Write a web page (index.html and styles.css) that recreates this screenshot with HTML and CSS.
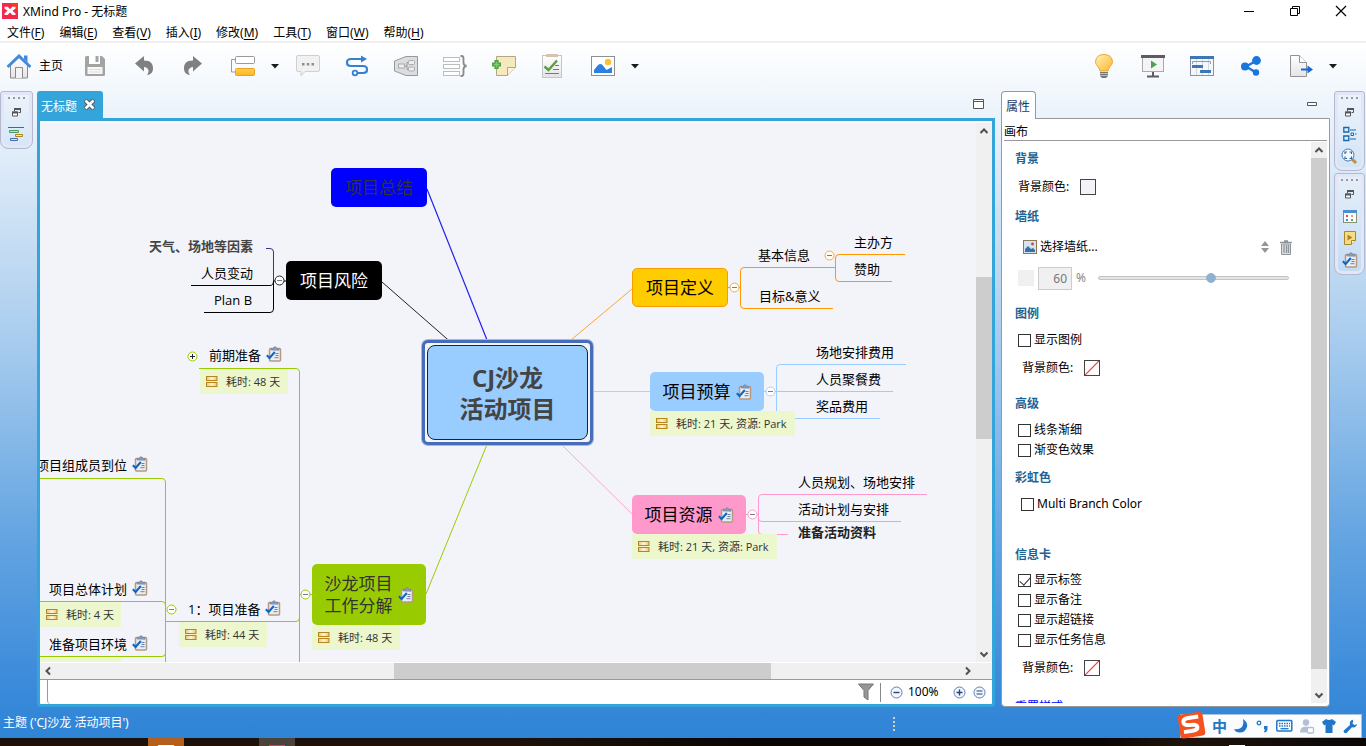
FILE: index.html
```html
<!DOCTYPE html>
<html lang="zh-CN">
<head>
<meta charset="utf-8">
<title>XMind Pro - 无标题</title>
<link rel="stylesheet" href="styles.css">
</head>
<body>
<svg class="defs" aria-hidden="true">
  <defs>
    <linearGradient id="gBulb" x1="0" y1="0" x2="1" y2="1"><stop offset="0" stop-color="#fff3b8"/><stop offset="1" stop-color="#fbb62c"/></linearGradient>
    <linearGradient id="gOrange" x1="0" y1="0" x2="0" y2="1"><stop offset="0" stop-color="#ffd050"/><stop offset="1" stop-color="#fcb424"/></linearGradient>
    <linearGradient id="gGold" x1="0" y1="0" x2="1" y2="0"><stop offset="0" stop-color="#f0c264"/><stop offset=".5" stop-color="#fff5dc"/><stop offset="1" stop-color="#f0c264"/></linearGradient>
    <linearGradient id="gPaper" x1="0" y1="0" x2="0" y2="1"><stop offset="0" stop-color="#fff"/><stop offset="1" stop-color="#e4e4e6"/></linearGradient>
    <symbol id="task" viewBox="0 0 16 16">
      <rect x="3.500" y="2.500" width="11" height="12.500" rx="1" fill="#e8edf6" stroke="#b79a7c" stroke-width="1.500"/>
      <path d="M5 4V2.500h2.300C7.300 .3 10.700 .3 10.700 2.500H13V4.300z" fill="#8b9bb9" stroke="#7080a3" stroke-width=".6"/>
      <path d="M9.500 7.500h3M9.500 9.500h3M8.500 11.700h4" stroke="#6a7fb0"/>
      <path d="M.8 9.200 3.600 12 8.800 6" fill="none" stroke="#0a66c4" stroke-width="2"/>
    </symbol>
    <symbol id="drawer" viewBox="0 0 12 12">
      <rect x=".5" y=".5" width="10.500" height="4" fill="url(#gGold)" stroke="#b5851f"/>
      <rect x=".5" y="6.500" width="10.500" height="4" fill="url(#gGold)" stroke="#b5851f"/>
    </symbol>
    <symbol id="restore" viewBox="0 0 9 9">
      <path d="M2.500 3V1h6v3.500H6.500" fill="none" stroke="#555"/><path d="M2 1h7" stroke="#555" stroke-width="2"/>
      <path d="M.5 4h5v4h-5z" fill="#fff" stroke="#555"/><path d="M0 4.500h6" stroke="#555" stroke-width="2"/>
    </symbol>
    <symbol id="slash" viewBox="0 0 14 14"><path d="M0 14 14 0" stroke="#f33" stroke-width="1.200"/></symbol>
    <symbol id="caret" viewBox="0 0 8 5"><path d="M0 0h8L4 4.500z" fill="#1c1c1c"/></symbol>
    <symbol id="minus" viewBox="0 0 11 11"><circle cx="5.500" cy="5.500" r="4.500" fill="#fff" stroke="currentColor"/><path d="M3 5.500h5" stroke="#7a7a94"/></symbol>
    <symbol id="plus" viewBox="0 0 11 11"><circle cx="5.500" cy="5.500" r="4.500" fill="#fff" stroke="currentColor"/><path d="M3 5.500h5M5.500 3v5" stroke="#223"/></symbol>
    <symbol id="up" viewBox="0 0 16 16"><path d="M4.500 10 8 6.500 11.500 10" fill="none" stroke="#505050" stroke-width="2"/></symbol>
    <symbol id="down" viewBox="0 0 16 16"><path d="M4.500 6.500 8 10 11.500 6.500" fill="none" stroke="#505050" stroke-width="2"/></symbol>
    <symbol id="left" viewBox="0 0 16 16"><path d="M10 4.500 6.500 8 10 11.500" fill="none" stroke="#505050" stroke-width="2"/></symbol>
    <symbol id="right" viewBox="0 0 16 16"><path d="M6 4.500 9.500 8 6 11.500" fill="none" stroke="#505050" stroke-width="2"/></symbol>
  </defs>
</svg>

<header class="titlebar">
  <svg class="logo" width="16" height="16" viewBox="0 0 16 16"><rect width="16" height="16" fill="#f5274c"/><path d="M16 0v8L8 0z" fill="#fa3a1d"/><path d="M2.500 3.800h3.300L8 6.200l2.200-2.400h3.300v1.600L10.500 7.800l3 2.600V12h-3L8 9.400 5.500 12h-3v-1.600l3-2.600-3-2.400z" fill="#fff"/></svg>
  <h1>XMind Pro - 无标题</h1>
  <div class="winbtns">
    <button aria-label="最小化"><svg width="12" height="12"><path d="M1 6.500h10" stroke="#000"/></svg></button>
    <button aria-label="还原"><svg width="12" height="12"><path d="M1.500 3.500h7v7h-7zM3.500 3.500v-2h7v7h-2" fill="none" stroke="#000"/></svg></button>
    <button aria-label="关闭"><svg width="12" height="12"><path d="M1 1l10 10M11 1 1 11" stroke="#000" stroke-width="1.200"/></svg></button>
  </div>
</header>

<nav class="menubar">
  <button>文件(<u>F</u>)</button><button>编辑(<u>E</u>)</button><button>查看(<u>V</u>)</button><button>插入(<u>I</u>)</button><button>修改(<u>M</u>)</button><button>工具(<u>T</u>)</button><button>窗口(<u>W</u>)</button><button>帮助(<u>H</u>)</button>
</nav>

<div class="app">
  <div class="toolbar">
    <button class="home"><svg width="26" height="26" viewBox="0 0 26 26"><path d="M4.500 12.500 13 4.500l8.500 8V25h-17z" fill="url(#gPaper)" stroke="#8a8a8a"/><path d="M9.500 25V14.500h7V25" fill="#f4f4f4" stroke="#8a8a8a"/><path d="M18 2.500h3.500v7L18 6z" fill="#3f8ae0"/><path d="M1.500 14 13 3l11.500 11" fill="none" stroke="#3f8ae0" stroke-width="2.800"/></svg><span>主页</span></button>
    <button class="tool" aria-label="保存"><svg width="24" height="24" viewBox="0 0 24 24"><path d="M2 3.500Q2 2 3.500 2H19l3 3v15.500Q22 22 20.500 22h-17Q2 22 2 20.500z" fill="#a3a3a3"/><path d="M6 2h11v8h-11z" fill="#fff"/><path d="M12.500 2h3v6h-3z" fill="#a3a3a3"/><path d="M4.500 13h15v7h-15z" fill="#f8f8f8"/><path d="M6 15.500h12M6 18h12" stroke="#ddd"/></svg></button>
    <button class="tool" aria-label="撤销"><svg width="24" height="24" viewBox="0 0 24 24"><path d="M3 9.500 12 2v4.500c7 0 9 3.500 9 8 0 3.500-2 6-6 6.500 3-4 1.500-7.500-3-8v4.500z" fill="#808080"/></svg></button>
    <button class="tool" aria-label="重做"><svg width="24" height="24" viewBox="0 0 24 24"><path d="M21 9.500 12 2v4.500c-7 0-9 3.500-9 8 0 3.500 2 6 6 6.500-3-4-1.500-7.500 3-8v4.500z" fill="#808080"/></svg></button>
    <button class="tool split" aria-label="主题"><svg width="26" height="24" viewBox="0 0 26 24"><path d="M6 5.500H1.500v12.500H6" fill="none" stroke="#9a9a9a"/><rect x="5.500" y="2.500" width="19" height="7" rx="1" fill="#fff" stroke="#999"/><rect x="5.500" y="14.500" width="19" height="7" rx="1" fill="url(#gOrange)" stroke="#eaa223"/></svg></button><button class="drop" aria-label="更多主题"><svg width="8" height="5"><use href="#caret"/></svg></button>
    <button class="tool" aria-label="批注"><svg width="26" height="24" viewBox="0 0 26 24"><path d="M3 1.500h20Q24.500 1.500 24.500 3v13q0 1.500-1.500 1.500H10L6 22v-4.500H3Q1.500 17.500 1.500 16V3Q1.500 1.500 3 1.500z" fill="#f1f1f1" stroke="#d0d0d0"/><path d="M7 9h2.500v2.500H7zM11.800 9h2.500v2.500h-2.500zM16.500 9H19v2.500h-2.500z" fill="#8e8e8e"/></svg></button>
    <button class="tool" aria-label="联系"><svg width="24" height="24" viewBox="0 0 24 24"><path d="M17 5H6Q2 5 2 8.500T6 12h12q4 0 4 3.500T18 19h-5" fill="none" stroke="#3680d0" stroke-width="2.200"/><path d="M16 1.500 22 5l-6 3.500z" fill="#3680d0"/><circle cx="10" cy="19" r="2.300" fill="#fff" stroke="#3680d0" stroke-width="1.800"/></svg></button>
    <button class="tool" aria-label="外框"><svg width="26" height="24" viewBox="0 0 26 24"><path d="M1.500 7 13 2.500h11.500v19H13L1.500 17z" fill="#dcdde0" stroke="#999"/><path d="M12 12h2M16 8.500h-2v7h2" fill="none" stroke="#999"/><rect x="5.500" y="10" width="6" height="4" fill="#eee" stroke="#aaa"/><rect x="15.500" y="6.500" width="6" height="4" rx="1" fill="#eee" stroke="#aaa"/><rect x="15.500" y="13" width="6" height="4" rx="1" fill="#eee" stroke="#aaa"/></svg></button>
    <button class="tool" aria-label="概要"><svg width="26" height="24" viewBox="0 0 26 24"><g fill="#fff" stroke="#bdbdbd"><rect x="1.500" y="3.500" width="16" height="4"/><rect x="1.500" y="10.500" width="16" height="4"/><rect x="1.500" y="17.500" width="16" height="4"/></g><path d="M18.500 2h1q2 0 2 2.500v4q0 3 3 3.500-3 .5-3 3.500v4q0 2.500-2 2.500h-1" fill="none" stroke="#8a8a8a" stroke-width="1.800"/></svg></button>
    <button class="tool" aria-label="备注"><svg width="26" height="24" viewBox="0 0 26 24"><path d="M5.500 2.500h19v11l-8 8h-11z" fill="#f6e9bd" stroke="#b4a680"/><path d="M24.500 13.500h-8v8" fill="#fbf5df" stroke="#b4a680"/><path d="M5.500 6v9M1 10.500h9" stroke="#4b9f45" stroke-width="4.200"/><path d="M5.500 7.500v6M2.500 10.500h6" stroke="#82cc73" stroke-width="1.500"/></svg></button>
    <button class="tool" aria-label="任务信息"><svg width="24" height="26" viewBox="0 0 24 26"><rect x="1.500" y="2.500" width="19" height="22" fill="url(#gPaper)" stroke="#c6c6c6"/><path d="M5 1h12v3H5z" fill="#d6c2ae"/><path d="M3.500 13.500 7.500 17 16 7.500" fill="none" stroke="#5a9d49" stroke-width="2.400"/><path d="M14 12.500h4M12 16.500h6M4 20.500h14" stroke="#777" stroke-width="1.200"/></svg></button>
    <button class="tool split" aria-label="图片"><svg width="26" height="24" viewBox="0 0 26 24"><rect x="1.500" y="2.500" width="23" height="19" fill="#fff" stroke="#8f8f8f"/><circle cx="18" cy="8" r="3.200" fill="#fcc22f"/><path d="M4 19v-3l4-5q2.500-2 4.500 0l4 5 5.500-3v6z" fill="#2b80e0"/></svg></button><button class="drop" aria-label="更多图片"><svg width="8" height="5"><use href="#caret"/></svg></button>
    <span class="spring"></span>
    <button class="tool" aria-label="头脑风暴"><svg width="20" height="26" viewBox="0 0 20 26"><path d="M6 18q0-2-2-4.200Q1.500 11 1.500 9 2 1.500 10 1.500T18.500 9q0 2-2.500 4.800-2 2.200-2 4.200z" fill="url(#gBulb)" stroke="#e9a92f"/><path d="M6 19h8v4l-2 2H8l-2-2z" fill="#777"/><path d="M6 20.500h8M6 22.500h8" stroke="#bbb"/></svg></button>
    <button class="tool" aria-label="演示"><svg width="26" height="24" viewBox="0 0 26 24"><path d="M13 18v4M7 22.500h12" stroke="#5d5d5d" stroke-width="2"/><rect x="2.500" y="3.500" width="21" height="14" fill="#f4f4f6" stroke="#aaa"/><path d="M1 1h24v3H1z" fill="#5d5d5d"/><path d="M11 6.500v8l6-4z" fill="#4e9f52"/></svg></button>
    <button class="tool" aria-label="甘特图"><svg width="26" height="24" viewBox="0 0 26 24"><rect x="1.500" y="2.500" width="23" height="19" fill="#f5f7fb" stroke="#8592a5"/><path d="M7.500 5v16M13.500 5v16M19.500 5v16" stroke="#d3d9e2"/><path d="M1 2h24v3H1z" fill="#3e77b6"/><path d="M3.500 10V7.500h18V10" fill="none" stroke="#9a9a9a"/><path d="M3 12.500h11M11 17.500h11" stroke="#3e77b6" stroke-width="3"/></svg></button>
    <button class="tool" aria-label="分享"><svg width="24" height="24" viewBox="0 0 24 24"><path d="M17 7 7 12.500l10 6" fill="none" stroke="#1877dc" stroke-width="2.400"/><circle cx="17.500" cy="6.500" r="4.400" fill="#1877dc"/><circle cx="6" cy="12.500" r="4" fill="#1877dc"/><circle cx="17" cy="18.500" r="3.200" fill="#1877dc"/></svg></button>
    <button class="tool split-end" aria-label="导出"><svg width="26" height="24" viewBox="0 0 26 24"><path d="M2.500 1.500h9l7 7v14h-16z" fill="url(#gPaper)" stroke="#929292"/><path d="M11.500 1.500v7h7" fill="#fff" stroke="#929292"/><path d="M13 15.500h8" stroke="#1669d2" stroke-width="2"/><path d="M19.500 11.500l5.500 4-5.500 4z" fill="#1669d2"/></svg></button><button class="drop" aria-label="更多导出"><svg width="8" height="5"><use href="#caret"/></svg></button>
  </div>

  <main class="work">
    <aside class="trim trim-left">
      <div class="stack">
        <span class="grip"></span>
        <button aria-label="还原"><svg width="9" height="9"><use href="#restore"/></svg></button>
        <button aria-label="大纲"><svg width="17" height="16" viewBox="0 0 17 16"><path d="M0 1.500h16" stroke="#2f6ea8"/><path d="M1.500 4.500h9v2h-9z" fill="#bfe4b8" stroke="#4f9b66"/><path d="M7.500 8.500h7v2h-7z" fill="#fbe9a8" stroke="#b0851c"/><path d="M2.500 12.500h7v2h-7z" fill="#d8e2f5" stroke="#4b6cb0"/></svg></button>
      </div>
    </aside>

    <section class="editor">
      <div class="tabs">
        <div class="tab"><span>无标题</span><button aria-label="关闭标签"><svg width="11" height="11" viewBox="0 0 11 11"><path d="M1 1l9 9M10 1l-9 9" stroke="#4b5a63" stroke-width="4.500"/><path d="M1.500 1.500l8 8M9.500 1.500l-8 8" stroke="#fff" stroke-width="2.600"/></svg></button></div>
        <button class="maxbtn" aria-label="最大化"><svg width="11" height="11"><path d="M.5 .5h10v9h-10zM.5 2.500h10" fill="#fff" stroke="#555"/></svg></button>
      </div>
      <div class="frame">
        <div class="viewport">
          <div class="canvas">
            <svg class="links" width="937" height="541">
              <g transform="translate(-40 -123)" fill="none">
                <path d="M427 189 489 345" stroke="#2020f0" stroke-width="1.200"/>
                <path d="M382 282 454 345" stroke="#222"/>
                <path d="M632 289 565 345" stroke="#ffa726"/>
                <path d="M650 391.500H592" stroke="#aad4fb"/>
                <path d="M632 514 559 442" stroke="#fba6cf"/>
                <path d="M426 594 488 442" stroke="#9c0"/>
                <path d="M266 248.500h4q3.500 0 3.500 3.500V281" stroke="#35358c"/>
                <path d="M191 285.500h79q3.500 0 3.500-4.500M204 312.500h66q3.500 0 3.500-3.500V281H286" stroke="#000"/>
                <path d="M199 368.500h97q3.500 0 3.500 3.500V662M166 621.500h130q3.500 0 3.500-3.500M300 594.500h12M40 478.500h122q3.500 0 3.500 3.500V662M40 601.500h122q3.500 0 3.500 3.500M40 656.500h122q3.500 0 3.500-3.500" stroke="#9c0"/>
                <path d="M728 287.500h12.500M835 267.500h-91q-3.500 0-3.500 3.500v34q0 3.500 3.500 3.500h89M905 254.500h-66q-3.500 0-3.500 3.500v20q0 3.500 3.500 3.500h53" stroke="#f90"/>
                <path d="M764 391.500h129M906 364.500H780q-3.500 0-3.500 3.500v47q0 3.500 3.500 3.500h100" stroke="#9cf"/>
                <path d="M746 514.500h12.500M927 494.500H762q-3.500 0-3.500 3.500v33q0 3.500 3.500 3.500h26M758.500 518q0 3.500 3.500 3.500h139" stroke="#f9c"/>
              </g>
            </svg>

            <div class="box center"><div>CJ沙龙<br>活动项目</div></div>
            <div class="box summary">项目总结</div>
            <div class="box risk">项目风险</div>
            <div class="box define">项目定义</div>
            <div class="box budget">项目预算<svg width="16" height="16"><use href="#task"/></svg></div>
            <div class="box resource">项目资源<svg width="16" height="16"><use href="#task"/></svg></div>
            <div class="box wbs"><span>沙龙项目<br>工作分解</span><svg width="16" height="16"><use href="#task"/></svg></div>

            <div class="topic strong muted t-weather">天气、场地等因素</div>
            <div class="topic t-people">人员变动</div>
            <div class="topic t-planb">Plan B</div>
            <div class="topic t-pre">前期准备<svg width="16" height="16"><use href="#task"/></svg></div>
            <div class="topic t-team">项目组成员到位<svg width="16" height="16"><use href="#task"/></svg></div>
            <div class="topic t-plan">项目总体计划<svg width="16" height="16"><use href="#task"/></svg></div>
            <div class="topic t-env">准备项目环境<svg width="16" height="16"><use href="#task"/></svg></div>
            <div class="topic t-prep"><span>1<span class="colon">：</span>项目准备</span><svg width="16" height="16"><use href="#task"/></svg></div>
            <div class="topic t-basic">基本信息</div>
            <div class="topic t-host">主办方</div>
            <div class="topic t-sponsor">赞助</div>
            <div class="topic t-goal">目标&amp;意义</div>
            <div class="topic t-venue">场地安排费用</div>
            <div class="topic t-dinner">人员聚餐费</div>
            <div class="topic t-prize">奖品费用</div>
            <div class="topic t-roles">人员规划、场地安排</div>
            <div class="topic t-schedule">活动计划与安排</div>
            <div class="topic strong t-material">准备活动资料</div>

            <div class="label l-pre"><svg width="12" height="12"><use href="#drawer"/></svg>耗时: 48 天</div>
            <div class="label l-plan"><svg width="12" height="12"><use href="#drawer"/></svg>耗时: 4 天</div>
            <div class="label l-env"></div>
            <div class="label l-prep"><svg width="12" height="12"><use href="#drawer"/></svg>耗时: 44 天</div>
            <div class="label l-wbs"><svg width="12" height="12"><use href="#drawer"/></svg>耗时: 48 天</div>
            <div class="label wide l-budget"><svg width="12" height="12"><use href="#drawer"/></svg>耗时: 21 天, 资源: Park</div>
            <div class="label wide l-resource"><svg width="12" height="12"><use href="#drawer"/></svg>耗时: 21 天, 资源: Park</div>

            <button class="fold f-risk" aria-label="收缩"><svg width="11" height="11"><use href="#minus"/></svg></button>
            <button class="fold f-pre" aria-label="展开"><svg width="11" height="11"><use href="#plus"/></svg></button>
            <button class="fold f-prep" aria-label="收缩"><svg width="11" height="11"><use href="#minus"/></svg></button>
            <button class="fold f-wbs" aria-label="收缩"><svg width="11" height="11"><use href="#minus"/></svg></button>
            <button class="fold f-define" aria-label="收缩"><svg width="11" height="11"><use href="#minus"/></svg></button>
            <button class="fold f-basic" aria-label="收缩"><svg width="11" height="11"><use href="#minus"/></svg></button>
            <button class="fold f-budget" aria-label="收缩"><svg width="11" height="11"><use href="#minus"/></svg></button>
            <button class="fold f-resource" aria-label="收缩"><svg width="11" height="11"><use href="#minus"/></svg></button>
          </div>
          <div class="vbar"><svg width="16" height="16"><use href="#up"/></svg><i class="v1"></i><b class="v2"></b><i class="v3"></i><svg width="16" height="16"><use href="#down"/></svg></div>
        </div>
        <div class="hbar"><svg width="16" height="16"><use href="#left"/></svg><i class="h1"></i><b class="h2"></b><i class="h3"></i><svg width="16" height="16"><use href="#right"/></svg></div>
        <div class="zoombar">
          <input class="sheets" aria-label="画布页" readonly>
          <button aria-label="筛选"><svg width="17" height="18" viewBox="0 0 17 18"><path d="M.5 1h15L10 7.500V17l-4-3V7.500z" fill="#969696" stroke="#777"/></svg></button>
          <span class="sep"></span>
          <button aria-label="缩小"><svg width="13" height="13" viewBox="0 0 13 13"><circle cx="6.500" cy="6.500" r="5.500" fill="#f3f7fd" stroke="#5d7fb5"/><path d="M3.500 6.500h6" stroke="#29456f" stroke-width="1.400"/></svg></button>
          <span class="pct">100%</span>
          <button aria-label="放大"><svg width="13" height="13" viewBox="0 0 13 13"><circle cx="6.500" cy="6.500" r="5.500" fill="#f3f7fd" stroke="#5d7fb5"/><path d="M3.500 6.500h6M6.500 3.500v6" stroke="#29456f" stroke-width="1.400"/></svg></button>
          <button class="fit" aria-label="实际大小"><svg width="13" height="13" viewBox="0 0 13 13"><circle cx="6.500" cy="6.500" r="5.500" fill="#f3f7fd" stroke="#5d7fb5"/><path d="M3.500 5h6M3.500 8h6" stroke="#29456f" stroke-width="1.200"/></svg></button>
        </div>
      </div>
    </section>

    <section class="props">
      <div class="tabs"><div class="ptab">属性</div><button class="minbtn" aria-label="最小化"><svg width="11" height="5"><path d="M.5 .5h9v3h-9z" fill="#fff" stroke="#555"/></svg></button></div>
      <div class="panel">
        <h2>画布</h2>
        <div class="scroller">
          <form class="form">
            <h3>背景</h3>
            <div class="row"><span>背景颜色:</span><button type="button" class="swatch tint" aria-label="背景颜色"></button></div>
            <h3 class="near">墙纸</h3>
            <div class="row wall">
              <button type="button" class="pick"><svg width="14" height="14" viewBox="0 0 14 14"><rect x=".5" y=".5" width="13" height="13" fill="#d2e5f5" stroke="#8a7a58"/><path d="M2 12V9l3-3 3 3 2-1 2 2v2z" fill="#3e6f9f"/><circle cx="9.500" cy="4" r="1.400" fill="#e33c35"/></svg>选择墙纸...</button>
              <span class="spring"></span>
              <button type="button" aria-label="调整"><svg width="8" height="12"><path d="M0 5h8L4 0zM0 7h8l-4 5z" fill="#969696"/></svg></button>
              <button type="button" aria-label="删除"><svg width="12" height="15" viewBox="0 0 12 15"><path d="M1.500 4h9v10.500h-9z" fill="#dadfe2" stroke="#909599"/><path d="M0 2.500h12M4 1h4M4 5v8M6.500 5v8M8.500 5v8" stroke="#909599" stroke-width="1.300"/></svg></button>
            </div>
            <div class="row opacity"><span class="chip"></span><input class="num" type="text" value="60" aria-label="不透明度" disabled><span class="unit">%</span><input class="range" type="range" min="0" max="100" value="60" aria-label="不透明度滑块" disabled></div>
            <h3 class="far">图例</h3>
            <label class="check"><input type="checkbox">显示图例</label>
            <div class="row inset"><span>背景颜色:</span><button type="button" class="swatch" aria-label="图例背景颜色"><svg width="14" height="14"><use href="#slash"/></svg></button></div>
            <h3 class="far">高级</h3>
            <label class="check"><input type="checkbox">线条渐细</label>
            <label class="check"><input type="checkbox">渐变色效果</label>
            <h3 class="near">彩虹色</h3>
            <label class="check shift"><input type="checkbox">Multi Branch Color</label>
            <h3 class="gap">信息卡</h3>
            <label class="check"><input type="checkbox" checked>显示标签</label>
            <label class="check"><input type="checkbox">显示备注</label>
            <label class="check"><input type="checkbox">显示超链接</label>
            <label class="check"><input type="checkbox">显示任务信息</label>
            <div class="row inset"><span>背景颜色:</span><button type="button" class="swatch" aria-label="信息卡背景颜色"><svg width="14" height="14"><use href="#slash"/></svg></button></div>
            <a class="reset" href="#">重置样式</a>
          </form>
          <div class="vbar"><svg width="16" height="16"><use href="#up"/></svg><b class="p1"></b><i class="p2"></i><svg width="16" height="16"><use href="#down"/></svg></div>
        </div>
      </div>
    </section>

    <aside class="trim trim-right">
      <div class="stack">
        <span class="grip"></span>
        <button aria-label="还原"><svg width="9" height="9"><use href="#restore"/></svg></button>
        <button aria-label="大纲视图"><svg width="14" height="16" viewBox="0 0 14 16"><path d="M.8 1.500h5v4.500h-5zM.8 10h5v4.500h-5z" fill="#dceefb" stroke="#1767ab" stroke-width="1.300"/><path d="M7 4h6M12 8h1.500M7 13h6" stroke="#1767ab"/><path d="M8 7h2.500v2.500H8z" fill="#fff" stroke="#1767ab"/></svg></button>
        <button aria-label="总览"><svg width="17" height="17" viewBox="0 0 17 17"><path d="M11 11l4 4" stroke="#c98b35" stroke-width="3"/><circle cx="7" cy="7" r="6" fill="#f2f8ff" stroke="#4f7cb3"/><path d="M4 6V4h2M8.500 4h2v2M10.500 8.500v2h-2M6 10.500H4v-2" fill="none" stroke="#2f669f" stroke-width="1.200"/></svg></button>
      </div>
      <div class="stack">
        <span class="grip"></span>
        <button aria-label="还原"><svg width="9" height="9"><use href="#restore"/></svg></button>
        <button aria-label="图标"><svg width="14" height="13" viewBox="0 0 14 13"><rect x=".5" y=".5" width="13" height="12" fill="#f8fbff" stroke="#8c8f78"/><path d="M0 0h14v3H0z" fill="#4c8fd0"/><path d="M3 5h2v2H3z" fill="#e24a3b"/><path d="M8 5h2v2H8z" fill="#f0a030"/><path d="M3 9h2v2H3z" fill="#2f9bc2"/><path d="M8 9h2v2H8z" fill="#52b34c"/></svg></button>
        <button aria-label="备注"><svg width="12" height="14" viewBox="0 0 12 14"><path d="M.5 .5h11v9l-4 4h-7z" fill="#f8dc80" stroke="#a8862c"/><path d="M3.500 3.500v6l5-3z" fill="#a8862c"/><path d="M11.500 9.500h-4v4" fill="#fff3c8" stroke="#a8862c"/></svg></button>
        <button aria-label="任务"><svg width="16" height="16"><use href="#task"/></svg></button>
      </div>
    </aside>
  </main>

  <footer class="status">
    <span>主题 ('CJ沙龙 活动项目')</span>
    <i class="dots"></i>
    <div class="ime">
      <svg class="sogou" width="30" height="28" viewBox="0 0 30 28"><g transform="rotate(-9 15 14)"><rect x="2" y="2" width="25" height="24" rx="3" fill="#f4511e"/><path d="M22.500 6.500H11Q6.500 7 7 10.500q.5 3 7.500 3.300 5.500.4 5.500 3 0 3-5.500 3H6" fill="none" stroke="#fff" stroke-width="4"/></g></svg>
      <span class="zh">中</span>
      <svg width="14" height="14" viewBox="0 0 14 14"><path d="M9 0q5 3 4 8-2 6-8 5.500Q1 13 0 10q6 1 8.500-3Q10 4 9 0z" fill="#2176c7"/></svg>
      <svg width="14" height="14" viewBox="0 0 14 14"><circle cx="4" cy="4" r="1.800" fill="none" stroke="#2176c7" stroke-width="1.300"/><path d="M9 7h3.500v3q0 2.500-3 3.500l-.5-1 1.500-2H9z" fill="#2176c7"/></svg>
      <svg width="17" height="14" viewBox="0 0 17 14"><rect x=".8" y="1.500" width="15" height="10.500" rx="1" fill="none" stroke="#2176c7" stroke-width="1.500"/><path d="M3 4.500h11M3 7h11" stroke="#2176c7" stroke-width="1.500" stroke-dasharray="1.500 1"/><path d="M4.500 9.700h8" stroke="#2176c7" stroke-width="1.300"/></svg>
      <svg width="15" height="15" viewBox="0 0 15 15"><circle cx="6" cy="3.500" r="3.200" fill="#b5bfd4"/><path d="M0 13.500Q0 7.500 6 7.500t6 6z" fill="#b5bfd4"/><rect x="7.500" y="8.500" width="6" height="5.500" rx="1" fill="#fff" stroke="#b5bfd4" stroke-width="1.300"/></svg>
      <svg width="14" height="14" viewBox="0 0 14 14"><path d="M4 0q3 2 6 0l4 3-2 3.500-1.500-1V14h-7V5.500l-1.500 1L0 3z" fill="#2176c7"/></svg>
      <svg width="15" height="15" viewBox="0 0 15 15"><path d="M9.500 .8Q6 2 7 6L.8 11.500q-.8 2.500 2.500 2.700L9 8.300q4 .8 5.200-3L11.500 6 9.500 4.500l.8-2.700z" fill="#2176c7"/></svg>
    </div>
  </footer>
</div>
<div class="taskbar"></div>
</body>
</html>
```

FILE: styles.css
```css
* { box-sizing: border-box; }
html, body { height: 100%; }
body {
  margin: 0;
  display: flex;
  flex-direction: column;
  overflow: hidden;
  background: #fff;
  color: #000;
  font: 12px/20px "Noto Sans", "Noto Sans CJK SC", sans-serif;
}
h1, h2, h3 { margin: 0; font-size: 12px; font-weight: 400; }
button, input { font: inherit; color: inherit; }
button { display: flex; align-items: center; justify-content: center; margin: 0; padding: 0; border: 0; background: none; }
svg { display: block; flex: none; }
.defs { position: absolute; width: 0; height: 0; }
.spring { flex: 1; }

.titlebar { display: flex; align-items: center; gap: 5px; height: 22px; padding-left: 2px; }
.titlebar h1 { flex: 1; padding-top: 1px; }
.winbtns { display: flex; padding-right: 2px; }
.winbtns button { width: 46px; height: 20px; }

.menubar { display: flex; gap: 15px; height: 21px; padding: 0 7px; border-bottom: 2px solid #f0f0f0; }
.menubar button { height: 21px; white-space: nowrap; }
.menubar u { text-underline-offset: 2px; }

.app {
  flex: 1;
  min-height: 0;
  display: flex;
  flex-direction: column;
  background: linear-gradient(#fff 0%, #e8f1fb 12%, #b9d6f1 35%, #9cc5ec 48%, #66a6e2 70%, #3b8bda 92%, #2f84d6 100%);
}

.toolbar { display: flex; align-items: center; height: 48px; padding: 0 25px 2px 6px; }
.home { width: 64px; gap: 7px; justify-content: flex-start; white-space: nowrap; }
.tool { width: 49px; height: 40px; }
.split, .split-end { margin-left: 1px; }
.drop { width: 16px; height: 40px; }

.work { flex: 1; min-height: 0; display: flex; }
.trim { flex: none; }
.trim-left { width: 37px; }
.trim-right { width: 32px; margin-left: 4px; }
.stack {
  display: flex;
  flex-direction: column;
  align-items: center;
  width: 33px;
  padding: 4px 0 3px;
  border: 1px solid #b3b9cf;
  border-radius: 3px 3px 8px 8px;
  background: linear-gradient(rgba(235, 241, 251, .7), rgba(197, 222, 245, .5));
  box-shadow: inset 0 0 0 3px #e2e6f6;
}
.trim-right .stack { width: 31px; }
.stack + .stack { margin-top: 2px; }
.stack button { width: 20px; height: 22px; }
.grip { width: 17px; height: 3px; margin: 1px 0; background: repeating-linear-gradient(90deg, #9a9a9a 0 2px, transparent 2px 5px); background-size: 100% 2px; background-repeat: no-repeat; }

.editor { flex: 1; min-width: 0; display: flex; flex-direction: column; }
.tabs { display: flex; align-items: flex-end; justify-content: space-between; height: 27px; }
.tab {
  display: flex;
  align-items: center;
  gap: 7px;
  height: 27px;
  padding: 4px 8px 0 4px;
  border-radius: 3px 3px 0 0;
  background: #33a5da;
  color: #fff;
}
.tab button { padding-bottom: 4px; }
.maxbtn { width: 20px; height: 27px; margin-right: 7px; }
.frame {
  flex: 1;
  min-height: 0;
  display: flex;
  flex-direction: column;
  border: 3px solid #33a5da;
  border-radius: 0 0 4px 4px;
  background: #fff;
}
.viewport { flex: 1; min-height: 0; display: flex; padding-top: 2px; }
.canvas { position: relative; flex: 1; min-width: 0; overflow: hidden; background: #f3f4f9; font-family: "Open Sans", "Noto Sans CJK SC", sans-serif; }
.links { position: absolute; left: 0; top: 0; }

.vbar { flex: none; display: flex; flex-direction: column; width: 16px; background: #f0f0f0; }
.hbar { flex: none; display: flex; height: 16px; margin-top: 1px; padding-right: 16px; background: #f0f0f0; }
.vbar b, .hbar b { background: #cdcdcd; }
.v1 { flex: 138; } .v2 { flex: 162; } .v3 { flex: 207; }
.h1 { flex: 338; } .h2 { flex: 377; } .h3 { flex: 189; }
.p1 { flex: 510; } .p2 { flex: 18; }

.zoombar { display: flex; align-items: center; height: 25px; padding: 0 6px 0 7px; border-top: 1px solid #999; }
.sheets { flex: 1; min-width: 0; height: 24px; padding: 0 4px; border: 0; border-left: 1px solid #999; border-bottom-left-radius: 4px; outline: 0; background: #fff; }
.sep { width: 1px; height: 19px; margin: 0 9px 0 5px; background: #888; }
.pct { width: 50px; padding-left: 5px; }
.fit { margin-left: 7px; }

/* mind map */
.box {
  position: absolute;
  display: flex;
  align-items: center;
  justify-content: center;
  gap: 5px;
  width: 96px;
  height: 39px;
  border-radius: 5px;
  font-size: 17px;
  line-height: 22px;
  white-space: nowrap;
}
.center {
  left: 382px; top: 217px; width: 171px; height: 105px;
  padding: 2px;
  border: 3px solid #476cba;
  border-radius: 6px;
  background: #f3f4f9;
  box-shadow: 0 0 0 1px #a9b8de;
  color: #444;
  font-size: 24px;
  font-weight: 700;
  line-height: 31px;
  text-align: center;
}
.center div {
  display: flex;
  flex: 1;
  align-items: center;
  justify-content: center;
  align-self: stretch;
  border: 1px solid #222;
  border-radius: 8px;
  background: #9cf;
}
.summary { left: 291px; top: 45px; background: #00f; color: #333; }
.risk { left: 246px; top: 138px; background: #000; color: #fff; }
.define { left: 592px; top: 145px; border: 1px solid #f90; background: #fc0; }
.budget { left: 610px; top: 249px; width: 114px; background: #9cf; }
.resource { left: 592px; top: 372px; width: 114px; background: #f9c; }
.wbs { left: 272px; top: 441px; width: 114px; height: 61px; background: #9c0; color: #333; }

.topic { position: absolute; display: flex; gap: 5px; font-size: 13px; line-height: 18px; white-space: nowrap; }
.strong { font-weight: 700; color: #222; }
.muted { color: #444; }
.colon { font-family: "Noto Sans CJK TC", sans-serif; }
.t-weather { left: 109px; top: 114px; }
.t-people { left: 161px; top: 141px; }
.t-planb { left: 174px; top: 168px; }
.t-pre { left: 169px; top: 223px; }
.t-team { left: -4px; top: 333px; }
.t-plan { left: 9px; top: 457px; }
.t-env { left: 9px; top: 512px; }
.t-prep { left: 148px; top: 477px; }
.t-basic { left: 718px; top: 123px; }
.t-host { left: 814px; top: 110px; }
.t-sponsor { left: 814px; top: 137px; }
.t-goal { left: 719px; top: 164px; }
.t-venue { left: 776px; top: 220px; }
.t-dinner { left: 776px; top: 247px; }
.t-prize { left: 776px; top: 274px; }
.t-roles { left: 758px; top: 350px; }
.t-schedule { left: 758px; top: 377px; }
.t-material { left: 758px; top: 400px; }

.label {
  position: absolute;
  display: flex;
  align-items: center;
  gap: 8px;
  width: 88px;
  height: 25px;
  padding-left: 6px;
  background: #ecf7cd;
  color: #333;
  font-size: 11px;
  line-height: 18px;
  white-space: nowrap;
}
.wide { width: 145px; }
.l-pre { left: 160px; top: 246px; }
.l-plan { left: 0; top: 479px; width: 81px; }
.l-env { left: 0; top: 535px; width: 81px; }
.l-prep { left: 139px; top: 499px; }
.l-wbs { left: 272px; top: 502px; }
.l-budget { left: 610px; top: 288px; }
.l-resource { left: 592px; top: 411px; }

.fold { position: absolute; width: 11px; height: 11px; }
.f-risk { left: 234px; top: 152px; color: #222; }
.f-pre { left: 147px; top: 228px; color: #9c0; }
.f-prep { left: 126px; top: 481px; color: #9c0; }
.f-wbs { left: 260px; top: 466px; color: #9c0; }
.f-define { left: 689px; top: 159px; color: #ffa733; }
.f-basic { left: 784px; top: 127px; color: #ffa733; }
.f-budget { left: 725px; top: 263px; color: #a5d0fa; }
.f-resource { left: 707px; top: 386px; color: #fa9cc9; }

/* properties */
.props { flex: none; width: 329px; margin-left: 6px; display: flex; flex-direction: column; }
.ptab {
  position: relative;
  z-index: 1;
  height: 28px;
  margin-bottom: -1px;
  padding: 5px 5px 0 4px;
  border: 1px solid #999;
  border-bottom: 0;
  border-radius: 4px 4px 0 0;
  background: #fff;
  color: #223a63;
}
.minbtn { height: 27px; margin-right: 12px; }
.panel {
  flex: 1;
  min-height: 0;
  display: flex;
  flex-direction: column;
  padding: 2px 2px 3px;
  border: 1px solid #999;
  border-radius: 0 0 4px 4px;
  background: #fff;
}
.panel h2 { flex: none; height: 20px; line-height: 21px; border-bottom: 1px solid #999; }
.scroller { flex: 1; min-height: 0; display: flex; margin-top: 1px; overflow: hidden; }
.form { flex: 1; min-width: 0; display: flex; flex-direction: column; padding: 7px 19px 0 11px; }
.form > * { flex: none; }
.form h3 { height: 20px; margin-bottom: 6px; color: #1d6394; font-weight: 600; }
.form .near { margin-top: 8px; }
.form .far { margin-top: 14px; }
.form .gap { margin-top: 31px; margin-bottom: 5px; }
.row { display: flex; align-items: center; gap: 11px; height: 24px; padding-left: 3px; }
.inset { margin-top: 6px; padding-left: 7px; }
.swatch { width: 16px; height: 16px; border: 1px solid #444; background: #fff; }
.tint { background: #f3f4f9; }
.wall { margin-top: 2px; padding-left: 8px; }
.pick { gap: 3px; }
.opacity { margin-top: 7px; gap: 4px; }
.chip { width: 16px; height: 16px; background: #f0f0f0; }
.num { width: 34px; height: 23px; padding: 0 4px; border: 1px solid #ccc; background: #f0f0f0; color: #777; text-align: right; }
.unit { width: 15px; color: #888; }
.range { flex: 1; min-width: 0; margin: 0 3px; height: 14px; appearance: none; background: none; }
.range::-webkit-slider-runnable-track { height: 4px; border: 1px solid #c4c4c4; border-radius: 2px; background: #e4e4e4; }
.range::-webkit-slider-thumb { appearance: none; width: 10px; height: 10px; margin-top: -4px; border: 1px solid #98b5cd; border-radius: 5px; background: #8eb1cf; }
.check { display: flex; align-items: center; gap: 3px; height: 20px; padding-left: 3px; }
.shift { padding-left: 6px; }
.check input { position: relative; appearance: none; width: 13px; height: 13px; margin: 0; border: 1px solid #333; background: #fff; }
.check input:checked::after { content: ""; position: absolute; left: 3px; top: 0; width: 5px; height: 9px; border: solid #333; border-width: 0 1px 1px 0; transform: rotate(42deg); }
.reset { margin-top: 17px; color: #00f; }

.status { position: relative; flex: none; display: flex; align-items: center; height: 31px; padding-left: 3px; color: #fff; }
.dots { position: absolute; left: 893px; top: 10px; width: 2px; height: 16px; background: repeating-linear-gradient(#d8d0c4 0 2px, transparent 2px 4px); }
.ime {
  position: absolute;
  right: 4px;
  bottom: 0;
  display: flex;
  align-items: center;
  justify-content: space-between;
  width: 182px;
  height: 24px;
  padding: 0 3px 0 31px;
  border: 1px solid #a9c4dd;
  background: #fafcfe;
}
.sogou { position: absolute; left: -4px; bottom: -2px; }
.zh { color: #2176c7; font-size: 15px; font-weight: 700; }

.taskbar {
  flex: none;
  height: 8px;
  background:
    linear-gradient(90deg, transparent 158px, #fff 158px 174px, transparent 174px 269px, #f03a4a 269px 285px, transparent 285px 1229px, #fff 1229px 1245px, transparent 1245px) bottom / 100% 1px no-repeat,
    linear-gradient(90deg, #1c120a 0 148px, #b4601c 148px 184px, #1c120a 184px 259px, #4b423c 259px 295px, #1c120a 295px 520px, #080505 760px 1100px, #1e130c 1180px, #090606);
}
```
